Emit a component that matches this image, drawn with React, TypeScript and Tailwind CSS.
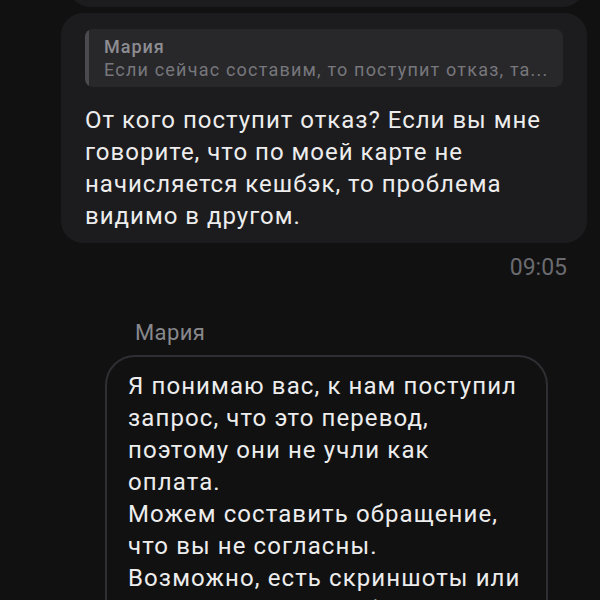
export default function App() {
  const mine = [
    "От кого поступит отказ? Если вы мне",
    "говорите, что по моей карте не",
    "начисляется кешбэк, то проблема",
    "видимо в другом.",
  ];
  const theirs = [
    "Я понимаю вас, к нам поступил",
    "запрос, что это перевод,",
    "поэтому они не учли как",
    "оплата.",
    "Можем составить обращение,",
    "что вы не согласны.",
    "Возможно, есть скриншоты или",
    "другие данные, чтобы",
  ];

  return (
    <div className="h-[600px] w-[600px] overflow-hidden bg-[#111112] font-['Roboto',sans-serif]">
      {/* previous bubble, cut off at the top */}
      <div className="-mt-[40px] ml-[68px] mr-[15px] h-[47px] rounded-[22px] bg-[#1c1c1e]" />

      <div className="ml-[61px] mr-[13px] mt-[6px] rounded-[22px] bg-[#1c1c1e] px-[24px] pt-[16px] pb-[11px]">
        <div className="flex h-[58px] overflow-hidden rounded-[8px] bg-[#28282b]">
          <div className="w-[4px] bg-[#4a4a4f]" />
          <div className="flex flex-col justify-center pl-[15px] pr-[12px] leading-[23px]">
            <span className="text-[18px] font-medium tracking-[1px] text-[#8d8d92]">Мария</span>
            <span className="whitespace-nowrap text-[18px] tracking-[1.2px] text-[#77777c]">
              Если сейчас составим, то поступит отказ, та...
            </span>
          </div>
        </div>
        <div className="mt-[17px] text-[24px] leading-[32px] tracking-[1px] text-[#ededed]">
          {mine.map((l) => (
            <div key={l} className="whitespace-nowrap">{l}</div>
          ))}
        </div>
      </div>

      <div className="mt-[12px] pr-[33px] text-right text-[23px] leading-[26px] text-[#6a6a6f]">09:05</div>

      <div className="mt-[39px] pl-[135px] text-[22px] leading-[26px] tracking-[0.4px] text-[#88888c]">Мария</div>

      <div className="ml-[105px] mt-[9px] w-[443px] rounded-[30px] border-2 border-[#2f2f33] pl-[21px] pt-[13px]">
        <div className="text-[24px] leading-[32px] tracking-[1.1px] text-[#ededed]">
          {theirs.map((l) => (
            <div key={l} className="whitespace-nowrap">{l}</div>
          ))}
        </div>
      </div>
    </div>
  );
}
